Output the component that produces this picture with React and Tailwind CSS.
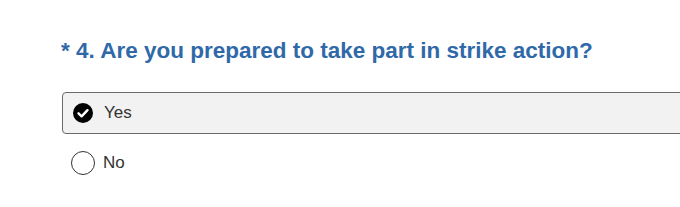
export default function App() {
  return (
    <div className="w-[680px] h-[207px] bg-white overflow-hidden" style={{ fontFamily: '"Liberation Sans", Arial, sans-serif' }}>
      <div className="pl-[61px] pt-[38px]">
        <h1 className="text-[22.5px] leading-[26px] font-bold text-[#2f69a8] whitespace-nowrap">* 4. Are you prepared to take part in strike action?</h1>
      </div>
      <div className="pl-[62px] mt-[28px]">
        <div className="w-[640px] h-[42px] border border-[#6b6b6b] rounded-[4px] bg-[#f2f2f2] flex items-center pl-[10px] gap-[11px]">
          <svg width="20" height="20" viewBox="0 0 20 20">
            <circle cx="10" cy="10" r="10" fill="#000" />
            <path d="M5.5 10.3 L8.6 13.3 L14.5 7.2" fill="none" stroke="#fff" strokeWidth="2.4" strokeLinecap="round" strokeLinejoin="round" />
          </svg>
          <span className="text-[17px] text-[#333]">Yes</span>
        </div>
        <div className="h-[44px] flex items-center pl-[9px] gap-[8px] mt-[7px]">
          <div className="w-[24px] h-[24px] rounded-full border border-[#333] bg-white" />
          <span className="text-[17px] text-[#333]">No</span>
        </div>
      </div>
    </div>
  );
}
